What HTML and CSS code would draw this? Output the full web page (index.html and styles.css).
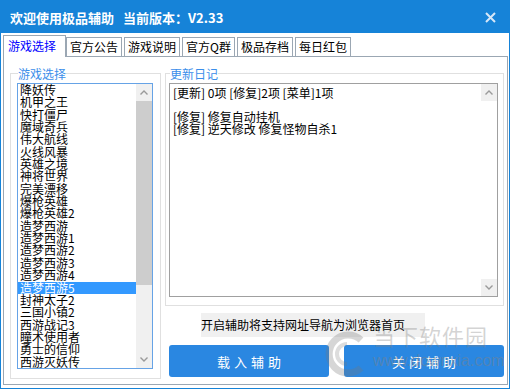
FILE: index.html
```html
<!DOCTYPE html>
<html lang="zh-CN">
<head>
  <meta charset="UTF-8">
  <title>极品辅助</title>
  <link rel="stylesheet" href="styles.css">
</head>
<body>
  <div class="window">
    <div class="titlebar">
      <span class="title">欢迎使用极品辅助<span class="version">当前版本：V2.33</span></span>
      <svg class="close" width="11" height="11" viewBox="0 0 11 11">
        <path d="M1 1 L10 10 M10 1 L1 10" stroke="#d6e7f7" stroke-width="2" fill="none"/>
      </svg>
    </div>

    <div class="tabs">
      <div class="tab active">游戏选择</div>
      <div class="tab">官方公告</div>
      <div class="tab">游戏说明</div>
      <div class="tab">官方Q群</div>
      <div class="tab">极品存档</div>
      <div class="tab">每日红包</div>
    </div>

    <div class="panel">
      <fieldset class="group games">
        <legend>游戏选择</legend>
        <div class="listbox">
          <ul class="items">
            <li>降妖传</li>
            <li>机甲之王</li>
            <li>快打僵尸</li>
            <li>魔域奇兵</li>
            <li>伟大航线</li>
            <li>火线风暴</li>
            <li>英雄之境</li>
            <li>神将世界</li>
            <li>完美漂移</li>
            <li>爆枪英雄</li>
            <li>爆枪英雄2</li>
            <li>造梦西游</li>
            <li>造梦西游1</li>
            <li>造梦西游2</li>
            <li>造梦西游3</li>
            <li>造梦西游4</li>
            <li class="selected">造梦西游5</li>
            <li>封神太子2</li>
            <li>三国小镇2</li>
            <li>西游战记3</li>
            <li>瞳术使用者</li>
            <li>勇士的信仰</li>
            <li>西游灭妖传</li>
          </ul>
          <div class="scrollbar">
            <div class="arrow">
              <svg width="8" height="5" viewBox="0 0 8 5"><path d="M0.5 4.5 L4 1 L7.5 4.5" fill="none" stroke="#9a9a9a" stroke-width="1.4"/></svg>
            </div>
            <div class="thumb"></div>
            <div class="track"></div>
            <div class="arrow">
              <svg width="8" height="5" viewBox="0 0 8 5"><path d="M0.5 0.5 L4 4 L7.5 0.5" fill="none" stroke="#9a9a9a" stroke-width="1.4"/></svg>
            </div>
          </div>
        </div>
      </fieldset>

      <div class="side">
        <fieldset class="group log">
          <legend>更新日记</legend>
          <div class="textbox">
            <div class="log-text">[更新] 0项 [修复]2项 [菜单]1项

[修复] 修复自动挂机
[修复] 逆天修改 修复怪物自杀1</div>
            <div class="scrollbar plain">
              <div class="arrow">
                <svg width="8" height="5" viewBox="0 0 8 5"><path d="M0.5 4.5 L4 1 L7.5 4.5" fill="none" stroke="#9a9a9a" stroke-width="1.4"/></svg>
              </div>
              <div class="track"></div>
              <div class="arrow">
                <svg width="8" height="5" viewBox="0 0 8 5"><path d="M0.5 0.5 L4 4 L7.5 0.5" fill="none" stroke="#9a9a9a" stroke-width="1.4"/></svg>
              </div>
            </div>
          </div>
        </fieldset>

        <div class="notice">开启辅助将支持网址导航为浏览器首页</div>

        <div class="buttons">
          <button class="btn">载入辅助</button>
          <button class="btn">关闭辅助</button>
        </div>
      </div>

      <!-- watermark from the screenshot source -->
      <div class="watermark">
        <svg class="wm-logo" width="44" height="48" viewBox="0 0 44 48">
          <path d="M36 10 A19 19 0 1 0 36 38" fill="none" stroke="rgba(120,120,120,0.3)" stroke-width="7"/>
          <path d="M22 14 A10 10 0 0 0 22 34" fill="none" stroke="rgba(120,120,120,0.25)" stroke-width="4"/>
        </svg>
        <div class="wm-name">当下软件园</div>
        <div class="wm-url">www.downxia.com</div>
      </div>
    </div>
  </div>
</body>
</html>
```

FILE: styles.css
```css
* {
  box-sizing: border-box;
}

body {
  margin: 0;
  background-color: #fff;
  color: #000;
  font-family: "Noto Sans CJK SC", "Noto Sans", sans-serif;
  font-size: 12px;
}

.window {
  width: 510px;
  height: 389px;
  border: 1px solid #1683d8;
  display: flex;
  flex-direction: column;
}

.titlebar {
  height: 32px;
  flex: none;
  background-color: #1683d8;
  color: #fff;
  display: flex;
  align-items: center;
  justify-content: space-between;
  padding: 0 13px 0 9px;
  font-size: 13px;
  font-weight: bold;
}

.version {
  margin-left: 9px;
}

/* tab strip */
.tabs {
  height: 23px;
  flex: none;
  display: flex;
  align-items: flex-end;
  padding-left: 2px;
}

.tab {
  height: 19px;
  line-height: 18px;
  padding: 0 3px;
  margin-left: 2px;
  border: 1px solid #9ba7b3;
  border-bottom: 0;
  background-color: #fff;
}

.tab.active {
  height: 22px;
  line-height: 20px;
  padding: 0 9px 0 4px;
  margin: 0 0 -1px 0;
  color: #0000ff;
  position: relative;
  z-index: 1;
}

.tab.active + .tab {
  margin-left: 0;
}

.panel {
  flex: 1;
  margin: 0 1px 3px 2px;
  border: 1px solid #9ba7b3;
  padding: 10px 2px 5px 6px;
  display: flex;
  gap: 4px;
  position: relative;
}

/* group boxes */
.group {
  margin: 0;
  min-width: 0;
  border: 1px solid #e0e0e0;
}

.group legend {
  padding: 0;
  margin-left: 1px;
  line-height: 13px;
  color: #3b8eea;
}

.games {
  width: 151px;
  flex: none;
  align-self: flex-start;
  padding: 3px 7px 9px 6px;
}

.listbox {
  height: 286px;
  border: 1px solid #66a3e6;
  display: flex;
}

.items {
  flex: 1;
  list-style: none;
  margin: 0;
  padding: 0;
  overflow: hidden;
}

.items li {
  height: 12.35px;
  line-height: 12.35px;
  padding-left: 2px;
  white-space: nowrap;
}

.items li.selected {
  background-color: #3399ff;
  color: #fff;
}

.scrollbar {
  width: 16px;
  flex: none;
  display: flex;
  flex-direction: column;
  background-color: #f0f0f0;
}

.scrollbar .arrow {
  height: 17px;
  flex: none;
  display: flex;
  align-items: center;
  justify-content: center;
  background-color: #f0f0f0;
}

.scrollbar .thumb {
  height: 184px;
  flex: none;
  background-color: #cdcdcd;
}

.scrollbar .track {
  flex: 1;
}

.scrollbar.plain {
  background-color: #fff;
}

/* right column */
.side {
  width: 339px;
  flex: none;
  display: flex;
  flex-direction: column;
}

.log {
  padding: 3px 5px 8px 3px;
}

.textbox {
  height: 214px;
  border: 1px solid #a0a0a0;
  display: flex;
}

.log-text {
  flex: 1;
  padding: 3px 0 0 3px;
  line-height: 12px;
  white-space: pre-line;
}

.notice {
  width: 224px;
  height: 24px;
  line-height: 24px;
  margin: 7px 0 0 36px;
  background-color: #f0f0f0;
}

.buttons {
  display: flex;
  gap: 15px;
  padding-left: 4px;
  margin-top: 8px;
}

.btn {
  flex: 1;
  height: 32px;
  border: 0;
  border-radius: 3px;
  background-color: #2a87e1;
  color: #fff;
  font-family: "Noto Sans CJK SC", sans-serif;
  font-size: 13px;
  letter-spacing: 4px;
  padding: 0 0 0 4px;
}

/* watermark */
.watermark {
  position: absolute;
  left: 319px;
  top: 265px;
  pointer-events: none;
}

.wm-logo {
  position: absolute;
  left: 2px;
  top: 8px;
}

.wm-name {
  position: absolute;
  left: 50px;
  top: 0;
  font-size: 22px;
  line-height: 26px;
  letter-spacing: 1px;
  white-space: nowrap;
  color: rgba(130, 130, 130, 0.35);
}

.wm-url {
  position: absolute;
  left: 50px;
  top: 30px;
  font-family: "Liberation Sans", sans-serif;
  font-size: 16px;
  line-height: 18px;
  white-space: nowrap;
  color: rgba(130, 130, 130, 0.45);
}
```
